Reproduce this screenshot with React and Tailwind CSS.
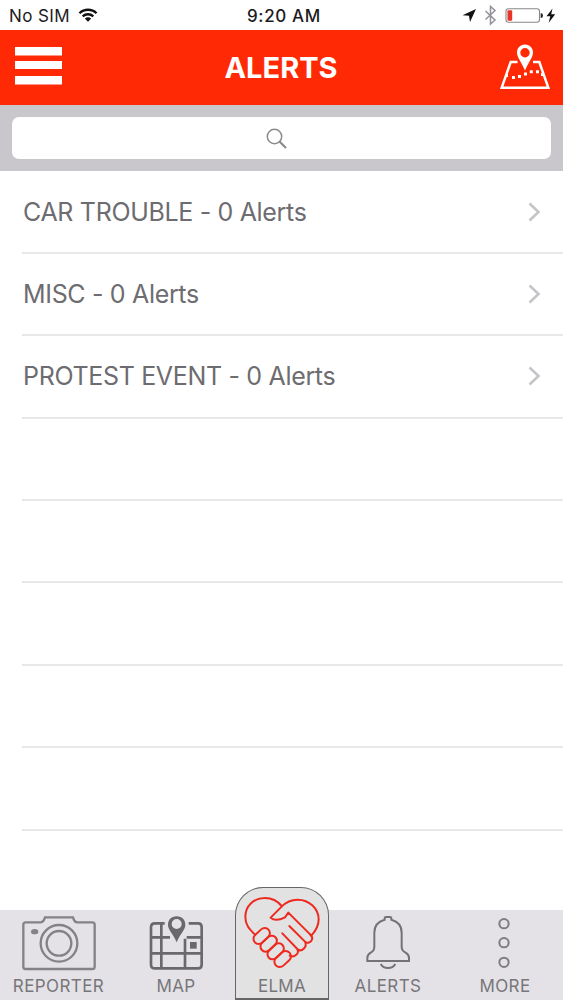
import React from "react";

const font = "font-['Inter','Liberation_Sans',sans-serif]";

function StatusBar() {
  return (
    <div className="flex h-[30px] shrink-0 items-center bg-white text-[#1c1c1e]">
      <div className="flex flex-1 items-center gap-[6px] pl-[9px]">
        <span className="w-[63px] whitespace-nowrap pt-px text-[17px] leading-[30px] tracking-[0.4px]">No SIM</span>
        <svg className="h-[14px] w-[20px]" viewBox="0 0 20 14" fill="none" stroke="#111" strokeWidth="2.3">
          <path d="M1.500 5.200A12.200 12.200 0 0 1 18.500 5.200M4.700 8.400A7.600 7.600 0 0 1 15.300 8.400" />
          <path d="M6.800 10.600Q10 7.800 13.200 10.600L10 13.800Z" fill="#111" stroke="none" />
        </svg>
      </div>
      <span className="whitespace-nowrap pr-[4px] pt-px text-[17px] font-medium leading-[30px] tracking-[0.65px]">9:20 AM</span>
      <div className="flex flex-1 justify-end">
        <svg className="h-[30px] w-[103px]" viewBox="460 0 103 30">
          <path d="M476 9L462.500 15.300L469 15.700L470 22Z" fill="#111" />
          <path d="M485.500 11L495 20L490.500 24V6.500L495 10.500L485.500 19.500" fill="none" stroke="#929298" strokeWidth="1.500" />
          <rect x="506" y="8.700" width="33.500" height="13.500" rx="2.500" fill="white" stroke="#888" strokeWidth="1.100" />
          <rect x="507.500" y="10.200" width="4.700" height="10.500" rx="1" fill="#e8352c" />
          <path d="M540.700 13Q543 13 543 15.500T540.700 18Z" fill="#222" />
          <path d="M552.500 8.500L546.500 16.300H550.300L548.700 22.700L555.200 14.200H551.200Z" fill="#111" />
        </svg>
      </div>
    </div>
  );
}

function Header() {
  return (
    <header className="flex h-[75px] shrink-0 items-center bg-[#ff2a05] text-white">
      <div className="flex-1 pl-[15px]">
        <svg className="-mt-1 h-[38px] w-[47px]" viewBox="0 0 47 38" fill="white">
          <path d="M0 0H47V8.500H0ZM0 14H47V22H0ZM0 29H47V37.500H0Z" />
        </svg>
      </div>
      <h1 className="pr-[5px] pt-px text-[29px] font-bold leading-[74px] tracking-[0px]">ALERTS</h1>
      <div className="flex flex-1 justify-end pr-[11px]">
        <svg className="h-[48px] w-[54px]" viewBox="498 43.500 54 48" fill="none" stroke="white">
          <path d="M517.500 61.500H510.700L501.700 87.200H548.300L539.300 61.500H533" strokeWidth="2.500" />
          <path fillRule="evenodd" fill="white" stroke="none" d="M525 44C520 44 517 47.800 517 52C517 57 521 60.500 525 70C529 60.500 533 57 533 52C533 47.800 530 44 525 44ZM525 47.500A4.700 4.700 0 1 1 525 56.900A4.700 4.700 0 1 1 525 47.500Z" />
          <path d="M505.500 75H508M512 77H515M518 76H521M524 73.400H527M529.800 71.300H532.800M536 71.300H539M541 74H544" strokeWidth="3" />
        </svg>
      </div>
    </header>
  );
}

function SearchBar() {
  return (
    <div className="h-[66px] shrink-0 bg-[#c9c7cb] px-3 pt-3">
      <div className="flex h-[42px] items-center justify-center rounded-[7px] bg-white pr-[11px]">
        <svg className="h-[21px] w-[21px]" viewBox="0 0 21 21" fill="none" stroke="#8b8b8e">
          <circle cx="8.500" cy="8.500" r="7.200" strokeWidth="1.500" />
          <path d="M13.500 13.500L20 20" strokeWidth="2.200" />
        </svg>
      </div>
    </div>
  );
}

const rows = [
  { name: "CAR TROUBLE - 0 Alerts" },
  { name: "MISC - 0 Alerts" },
  { name: "PROTEST EVENT - 0 Alerts" },
  {}, {}, {}, {}, {},
];

function AlertRow({ name }) {
  return (
    <li className="ml-[22px] flex h-[82.4px] shrink-0 items-center justify-between border-b-2 border-[#e8e8ea] pr-[22px]">
      {name && (
        <>
          <span className="whitespace-nowrap pl-px text-[25px] leading-[30px] tracking-[-0.33px] text-[#6d6c70]">{name}</span>
          <svg className="h-[20px] w-[13px]" viewBox="0 0 13 20" fill="none" stroke="#c5c5c9" strokeWidth="2.600">
            <path d="M1.500 1.500L10.500 10L1.500 18.500" />
          </svg>
        </>
      )}
    </li>
  );
}

function NavItem({ label, width, children }) {
  return (
    <div className={"flex h-[90px] flex-col items-center justify-between pb-[2px] " + width}>
      {children}
      <span className="text-[17px] leading-[23px] tracking-[0.4px]">{label}</span>
    </div>
  );
}

function HandshakeHeart() {
  return (
    <svg className="h-[84px] w-[84px]" viewBox="45 22 252 252" fill="none" stroke="#ed2a20" strokeWidth="6" strokeLinejoin="round" strokeLinecap="round">
      <path d="M90 162C72 144 61 132 61 109C61 75 87 52 120 52C140 52 157 60 170 76M137 111L170 78C183 64 199 57 218 57C253 57 281 84 281 116C281 138 272 151 259 165M137 111Q152 124 180 110L190 96L256 162" />
      <path d="M193 136L240 183M172 158L217 205M256 162C270 174 253 194 240 183C248 198 229 217 217 205C224 220 207 232 194 225" />
      <rect x="-28" y="-15.500" width="56" height="31" rx="15.500" transform="translate(110 166) rotate(-43)" />
      <rect x="-28" y="-15.500" width="56" height="31" rx="15.500" transform="translate(131 189) rotate(-43)" />
      <rect x="-28" y="-15.500" width="56" height="31" rx="15.500" transform="translate(152 212) rotate(-43)" />
      <rect x="-28" y="-16" width="56" height="32" rx="16" transform="translate(173 235) rotate(-43)" />
    </svg>
  );
}

function BottomNav() {
  return (
    <nav className="flex h-[90px] shrink-0 items-end bg-[#e4e2e6] text-[#77767a]">
      <NavItem label="REPORTER" width="w-[117px]">
        <svg className="h-[64px] w-[80px]" viewBox="56 90 240 192" fill="none" stroke="#838286" strokeWidth="7">
          <path d="M76 127H121Q130 126 134 112H218Q222 127 231 127H276Q283 127 283 134V260Q283 267 276 267H76Q69 267 69 260V134Q69 127 76 127Z" />
          <circle cx="176" cy="190" r="55" />
          <circle cx="176" cy="190" r="37" />
          <ellipse cx="103" cy="155" rx="11" ry="8" fill="#838286" stroke="none" />
        </svg>
      </NavItem>
      <NavItem label="MAP" width="w-[118px]">
        <svg className="h-[64px] w-[60px]" viewBox="438 90 180 192" fill="none" stroke="#69686c" strokeWidth="8">
          <path d="M494 130H465Q453 130 453 142V254Q453 265 465 265H594Q605 265 605 254V142Q605 130 594 130H566M484 130V265M453 172H510M560 172H605M453 220H605M555 176V265" />
          <path fillRule="evenodd" fill="#69686c" stroke="none" d="M530 109C513 109 504 121 504 134C504 150 519 160 530 187C541 160 556 150 556 134C556 121 547 109 530 109ZM530 117A15 15 0 1 1 530 147A15 15 0 1 1 530 117Z" />
          <rect x="570" y="186" width="20" height="20" fill="#69686c" stroke="none" />
        </svg>
      </NavItem>
      <div className="flex h-[113px] w-[94px] flex-col items-center justify-between rounded-t-[28px] border border-b-2 border-[#666] bg-[#e2e2e3]">
        <HandshakeHeart />
        <span className="text-[17px] leading-[23px] tracking-[0.3px]">ELMA</span>
      </div>
      <NavItem label="ALERTS" width="w-[118px]">
        <svg className="h-[64px] w-[60px]" viewBox="68 90 180 192" fill="none" stroke="#737276" strokeWidth="6">
          <path d="M148 119V115Q148 111 153 111H163Q168 111 168 115V119Q199 127 199 158V200Q199 212 211 218Q221 224 221 234V243H96V234Q96 224 106 218Q117 212 117 200V158Q117 127 148 119ZM136 252Q143 264 158 264T180 252" />
        </svg>
      </NavItem>
      <NavItem label="MORE" width="w-[116px]">
        <svg className="h-[64px] w-[20px]" viewBox="480 90 60 192" fill="none" stroke="#7d7c80" strokeWidth="6">
          <circle cx="507" cy="131" r="14" /><circle cx="507" cy="188" r="14" /><circle cx="507" cy="247" r="14" />
        </svg>
      </NavItem>
    </nav>
  );
}

export default function App() {
  return (
    <div className={"flex h-[1000px] w-[563px] flex-col overflow-hidden bg-white " + font}>
      <StatusBar />
      <Header />
      <SearchBar />
      <ul className="flex flex-1 flex-col pt-[0.5px]">
        {rows.map((row, i) => <AlertRow key={i} name={row.name} />)}
      </ul>
      <BottomNav />
    </div>
  );
}
